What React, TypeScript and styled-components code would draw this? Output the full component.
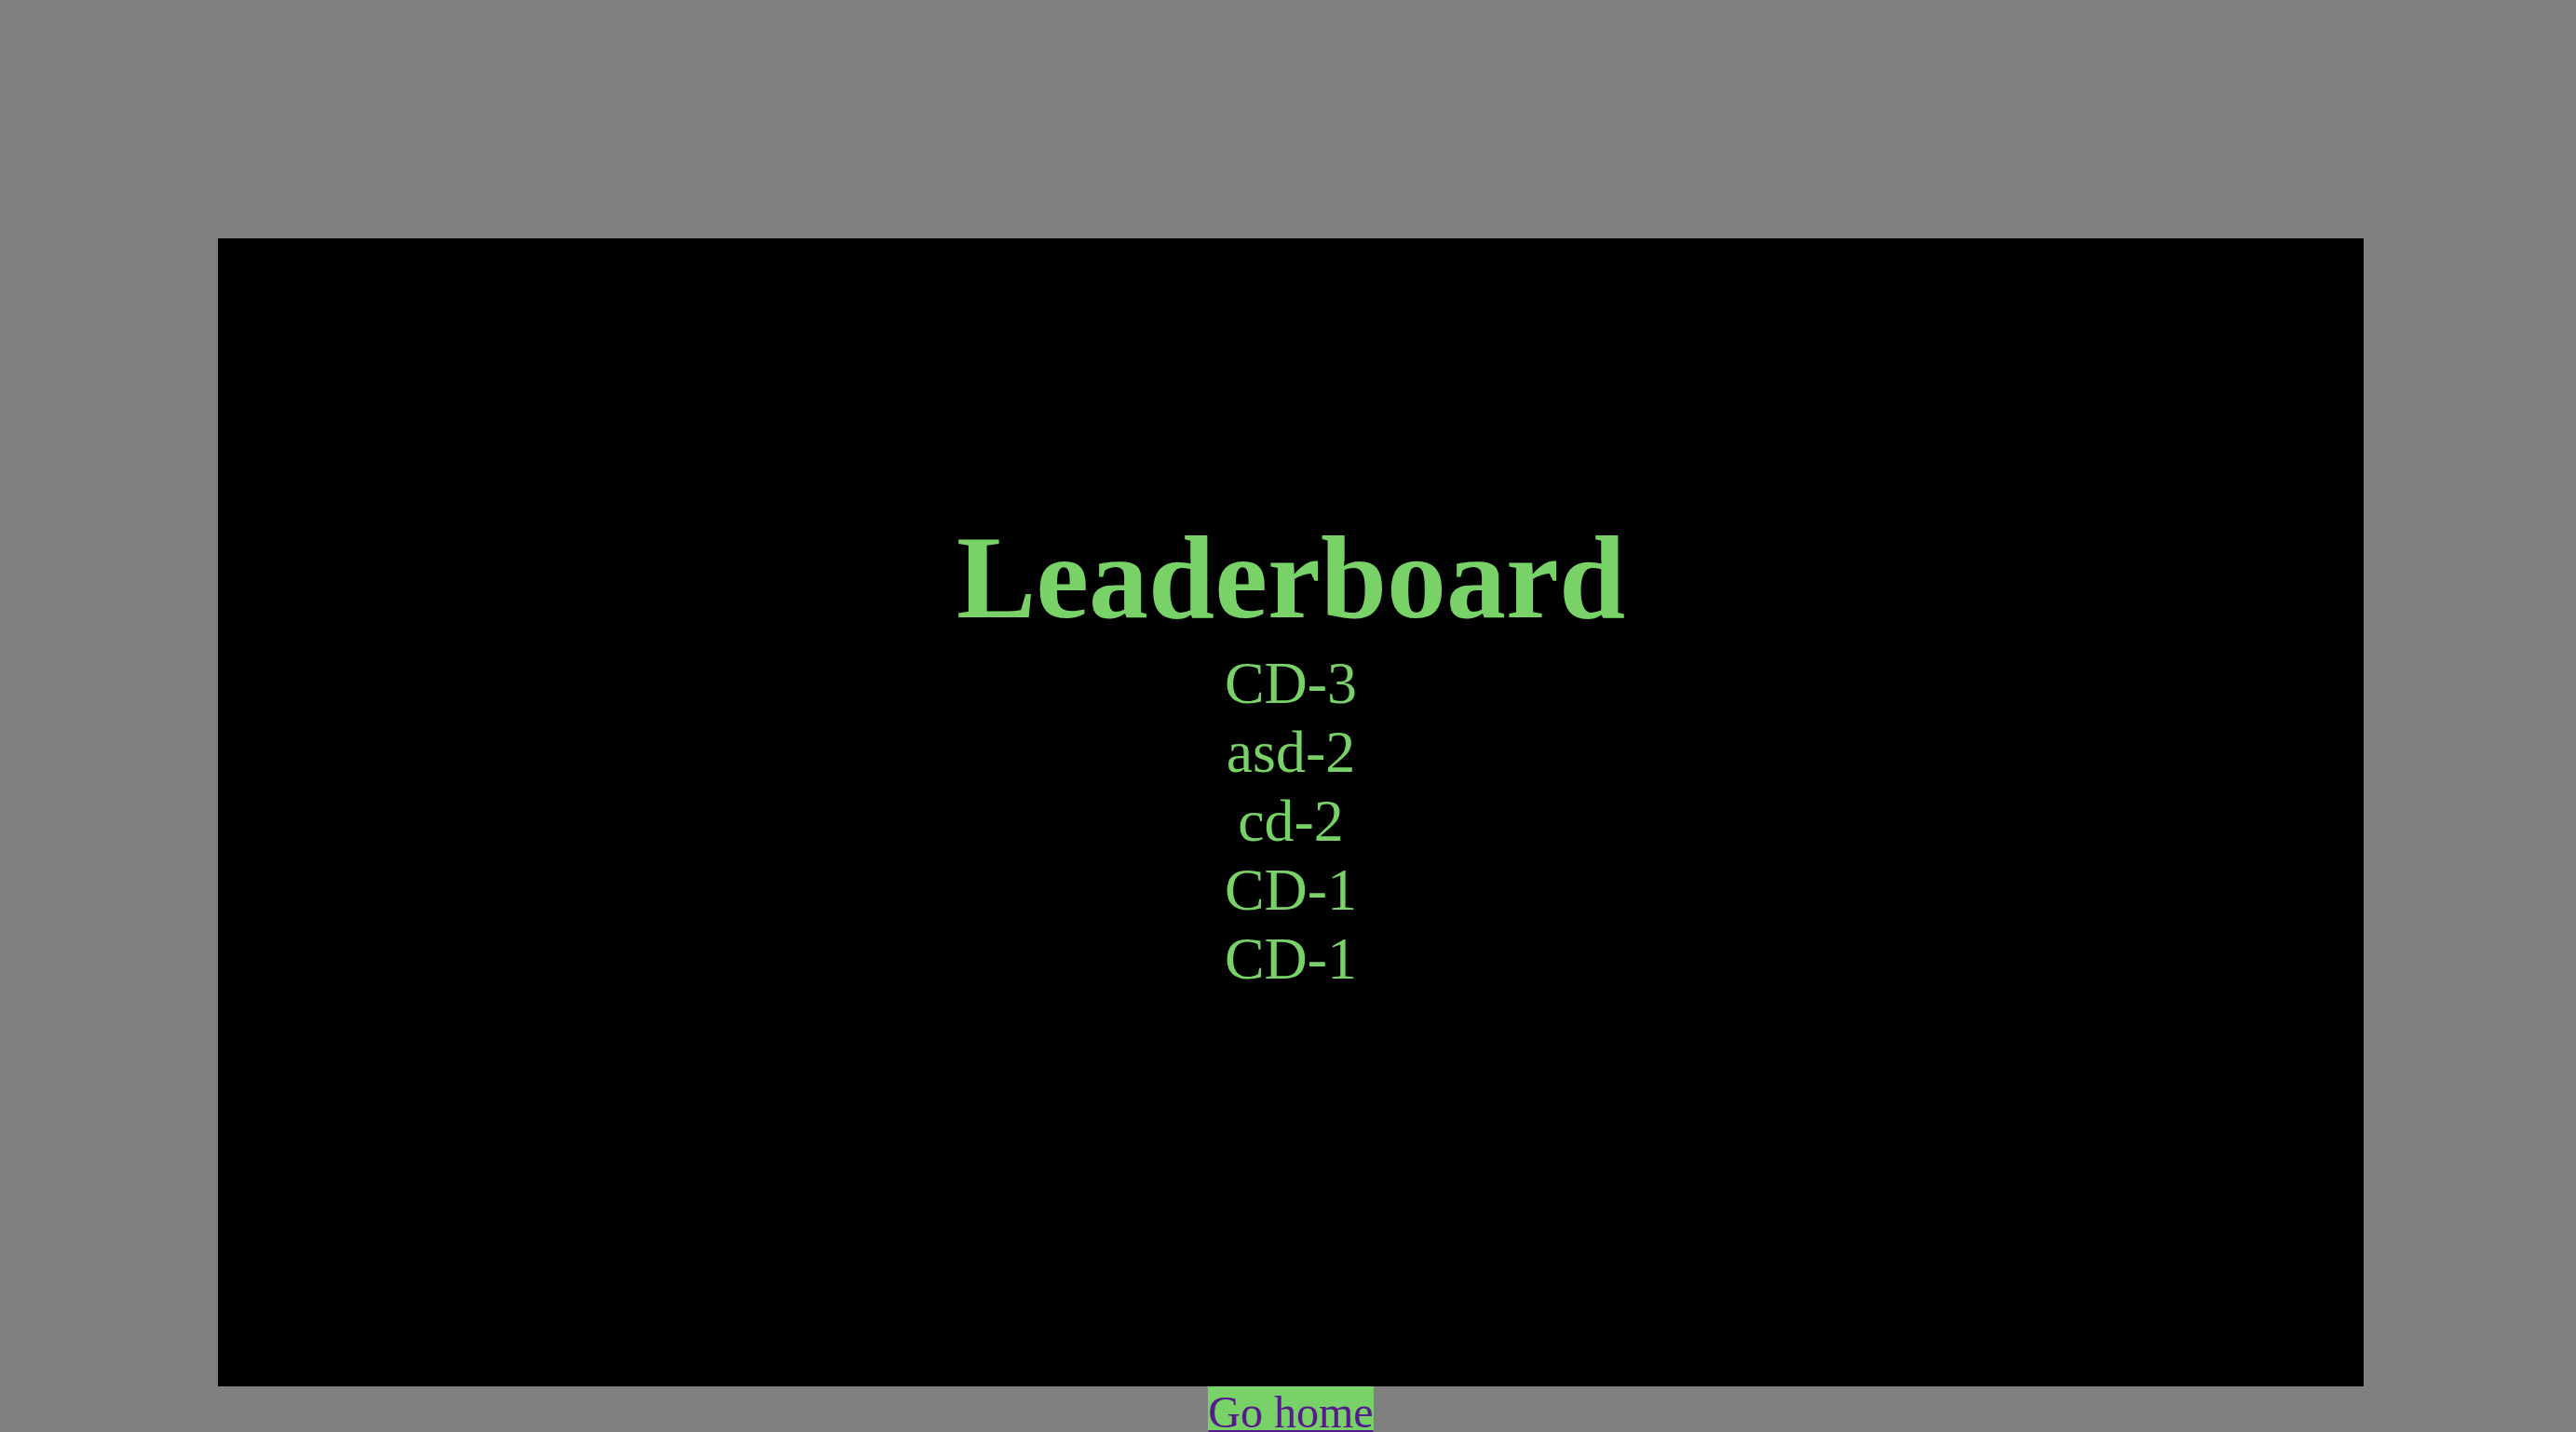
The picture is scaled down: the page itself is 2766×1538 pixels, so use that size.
import React from 'react';
import styled, { createGlobalStyle } from 'styled-components';

const GlobalStyle = createGlobalStyle`
  html, body {
    margin: 0;
    padding: 0;
    overflow: hidden;
    background: #808080;
  }
  body {
    font-family: "Liberation Serif", "Times New Roman", serif;
  }
`;

const Page = styled.div`
  width: 2304px;
  margin-left: 234px;
  padding-top: 256px;
  display: flex;
  flex-direction: column;
  align-items: center;
`;

const Board = styled.div`
  width: 100%;
  height: 1233px;
  box-sizing: border-box;
  padding-top: 291px;
  background: #000;
  display: flex;
  flex-direction: column;
  align-items: center;
  color: #78d268;
  font-size: 64px;
`;

const Title = styled.h1`
  margin: 0;
  font-size: 128px;
  font-weight: bold;
  line-height: normal;
`;

const List = styled.div`
  margin-top: 3px;
  display: flex;
  flex-direction: column;
  align-items: center;
`;

const Entry = styled.div`
  line-height: normal;
`;

const HomeLink = styled.a`
  font-size: 48px;
  background: #78d268;
  color: #551a8b;
  text-decoration: underline;
  line-height: normal;
`;

const scores = ['CD-3', 'asd-2', 'cd-2', 'CD-1', 'CD-1'];

export default function App() {
  return (
    <>
      <GlobalStyle />
      <Page>
        <Board>
          <Title>Leaderboard</Title>
          <List>
            {scores.map((s, i) => (
              <Entry key={i}>{s}</Entry>
            ))}
          </List>
        </Board>
        <HomeLink href="#">Go home</HomeLink>
      </Page>
    </>
  );
}
